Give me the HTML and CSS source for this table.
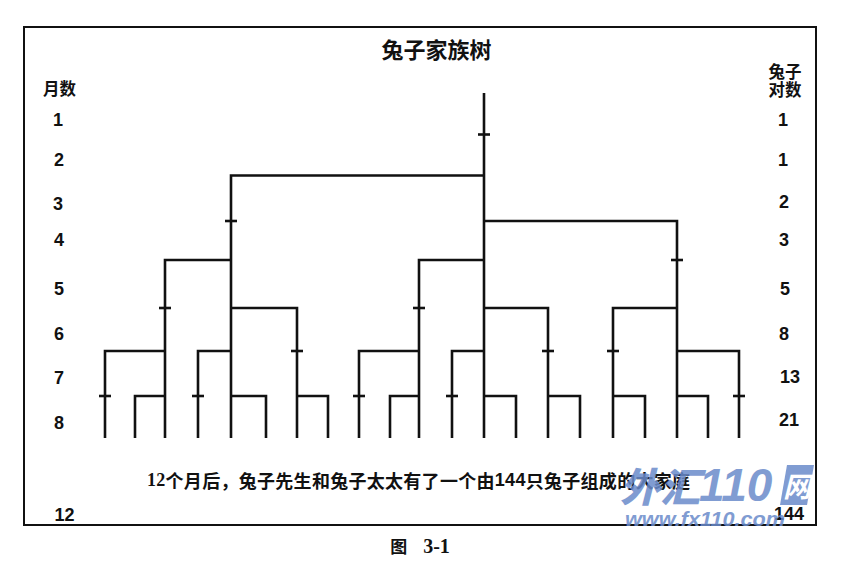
FILE: index.html
```html
<!DOCTYPE html>
<html lang="zh">
<head>
<meta charset="utf-8">
<title>兔子家族树</title>
<link rel="stylesheet" href="styles.css">
</head>
<body>
<div class="page">
  <div class="figure">
    <div class="frame">
      <svg class="tree" viewBox="25 28 790 496" width="790" height="496">
        <text class="zh title" x="436.5" y="48">兔子家族树</text>

        <text class="zh head" x="59.5" y="87.5">月数</text>
        <text class="zh head" x="785" y="71">兔子</text>
        <text class="zh head" x="785" y="89">对数</text>

        <g class="num">
          <text x="58" y="120">1</text>
          <text x="59" y="159.5">2</text>
          <text x="58" y="203.5">3</text>
          <text x="59" y="240">4</text>
          <text x="59" y="289">5</text>
          <text x="59" y="333.5">6</text>
          <text x="59" y="378">7</text>
          <text x="59" y="422.5">8</text>
          <text x="64.5" y="515">12</text>

          <text x="783" y="120">1</text>
          <text x="783" y="159.5">1</text>
          <text x="784" y="201.5">2</text>
          <text x="784" y="240">3</text>
          <text x="785" y="289">5</text>
          <text x="784" y="333.5">8</text>
          <text x="790" y="377">13</text>
          <text x="789" y="420">21</text>
          <text x="789" y="513.5">144</text>
        </g>

        <g class="lines">
          <path d="M484 93 V438"/>
          <path d="M231 438 V175.5 H484"/>
          <path d="M677 438 V221 H484"/>
          <path d="M165 438 V260 H231"/>
          <path d="M419 438 V260 H484"/>
          <path d="M297 438 V308 H231"/>
          <path d="M548 438 V308 H484"/>
          <path d="M613 438 V308 H677"/>
          <path d="M105 438 V351 H165"/>
          <path d="M198 438 V351 H231"/>
          <path d="M359 438 V351 H419"/>
          <path d="M452 438 V351 H484"/>
          <path d="M739 438 V351 H677"/>
          <path d="M135 438 V396 H165"/>
          <path d="M266 438 V396 H231"/>
          <path d="M328 438 V396 H297"/>
          <path d="M390 438 V396 H419"/>
          <path d="M516 438 V396 H484"/>
          <path d="M580 438 V396 H548"/>
          <path d="M645 438 V396 H613"/>
          <path d="M708 438 V396 H677"/>
        </g>

        <g class="ticks">
          <path d="M478 134.5 H490"/>
          <path d="M225 221 H237"/>
          <path d="M671 260 H683"/>
          <path d="M159 308 H171"/>
          <path d="M413 308 H425"/>
          <path d="M291 351 H303"/>
          <path d="M542 351 H554"/>
          <path d="M607 351 H619"/>
          <path d="M99 396 H111"/>
          <path d="M192 396 H204"/>
          <path d="M353 396 H365"/>
          <path d="M446 396 H458"/>
          <path d="M733 396 H745"/>
        </g>

        <text class="zh note" x="147" y="480" textLength="543" lengthAdjust="spacing"><tspan class="serif">12</tspan>个月后，兔子先生和兔子太太有了一个由<tspan class="sans">144</tspan>只兔子组成的大家庭</text>

        <g class="watermark">
          <text class="zh wm-zh" x="620" y="485">外汇</text>
          <text class="wm-num" x="699" y="485">110</text>
          <polygon class="wm-box" points="787,465 814,465 807,505 780,505"/>
          <text class="zh wm-net" x="797" y="485">网</text>
          <text class="wm-url" x="625" y="518" textLength="160" lengthAdjust="spacingAndGlyphs">www.fx110.com</text>
        </g>
      </svg>
    </div>
    <div class="caption"><span class="cap-zh">图</span><span class="cap-num">3-1</span></div>
  </div>
</div>
</body>
</html>
```

FILE: styles.css
```css
html, body {
  margin: 0;
  padding: 0;
  background: #ffffff;
}

.page {
  padding: 26px 0 0 23px;
}

.figure {
  width: 794px;
  display: flex;
  flex-direction: column;
  align-items: center;
}

.frame {
  position: relative;
  width: 790px;
  height: 496px;
  border: 2px solid #111111;
}

.tree {
  display: block;
  overflow: visible;
}

.tree text {
  dominant-baseline: central;
  fill: #111111;
  text-anchor: middle;
}

.zh {
  font-family: "Noto Sans CJK SC", "Noto Sans CJK JP", sans-serif;
  font-weight: 700;
}

.title {
  font-size: 22px;
}

.head {
  font-size: 16.5px;
}

.num text {
  font-family: "Liberation Sans", Arial, sans-serif;
  font-weight: 700;
  font-size: 18px;
}

.lines path,
.ticks path {
  fill: none;
  stroke: #111111;
  stroke-width: 2.6;
  stroke-linejoin: miter;
}

.tree .note {
  font-size: 18px;
  text-anchor: start;
}

.serif {
  font-family: "Liberation Serif", "Times New Roman", serif;
  font-weight: 700;
}

.sans {
  font-family: "Liberation Sans", Arial, sans-serif;
  font-weight: 700;
}

.watermark {
  opacity: 0.85;
}

.tree .wm-zh {
  font-size: 40px;
  font-weight: 900;
  font-style: italic;
  text-anchor: start;
  fill: #6a8bcb;
}

.tree .wm-num {
  font-family: "Liberation Sans", Arial, sans-serif;
  font-weight: 700;
  font-style: italic;
  font-size: 46px;
  text-anchor: start;
  fill: #6a8bcb;
}

.wm-box {
  fill: #6a8bcb;
}

.tree .wm-net {
  font-size: 28px;
  font-style: italic;
  fill: #ffffff;
}

.tree .wm-url {
  font-family: "Liberation Sans", Arial, sans-serif;
  font-weight: 700;
  font-style: italic;
  font-size: 21px;
  text-anchor: start;
  fill: #6a8bcb;
}

.caption {
  margin-top: 10px;
  display: flex;
  align-items: baseline;
  gap: 16px;
  line-height: 20px;
  color: #111111;
}

.cap-zh {
  font-family: "Noto Sans CJK SC", "Noto Sans CJK JP", sans-serif;
  font-weight: 700;
  font-size: 17px;
}

.cap-num {
  font-family: "Liberation Serif", "Times New Roman", serif;
  font-weight: 700;
  font-size: 20px;
}
```
